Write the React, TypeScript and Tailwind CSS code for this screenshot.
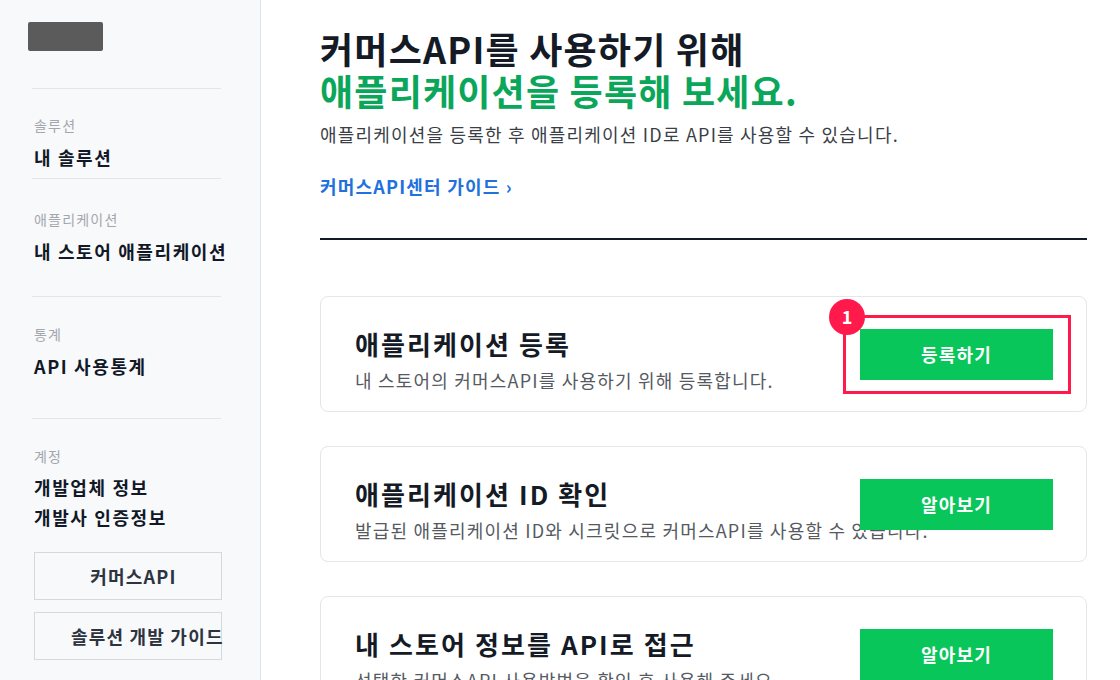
const font = { fontFamily: '"Noto Sans CJK KR", "Noto Sans", sans-serif' };

type NavSection = {
  label: string;
  items: string[];
  pad: string;
};

const sections: NavSection[] = [
  { label: '솔루션', items: ['내 솔루션'], pad: 'pt-[26px] pb-[8px]' },
  { label: '애플리케이션', items: ['내 스토어 애플리케이션'], pad: 'pt-[30px] pb-[32px]' },
  { label: '통계', items: ['API 사용통계'], pad: 'pt-[27px] pb-[39px]' },
];

type Card = {
  title: string;
  desc: string;
  action: string;
  highlight?: boolean;
};

const cards: Card[] = [
  {
    title: '애플리케이션 등록',
    desc: '내 스토어의 커머스API를 사용하기 위해 등록합니다.',
    action: '등록하기',
    highlight: true,
  },
  {
    title: '애플리케이션 ID 확인',
    desc: '발급된 애플리케이션 ID와 시크릿으로 커머스API를 사용할 수 있습니다.',
    action: '알아보기',
  },
  {
    title: '내 스토어 정보를 API로 접근',
    desc: '선택한 커머스API 사용방법을 확인 후 사용해 주세요.',
    action: '알아보기',
  },
];

function Sidebar() {
  return (
    <aside className="w-[261px] shrink-0 border-r border-[#dfe3ea] bg-[#f8f9fb] pl-[32px] pr-[39px]">
      <div className="pt-[22px] pb-[37px] -ml-[4px]">
        <div className="h-[29px] w-[75px] rounded-[2px] bg-[#5b5b5b]" />
      </div>

      {sections.map((s) => (
        <div key={s.label} className={`border-t border-[#e3e5e8] pl-[2px] ${s.pad}`}>
          <div className="text-[14px] leading-[20px] text-[#a3a7ad]">{s.label}</div>
          <div className="mt-[9px] whitespace-nowrap text-[18px] font-bold leading-[26px] tracking-[0.09em] text-[#111827]">
            {s.items[0]}
          </div>
        </div>
      ))}

      <div className="border-t border-[#e3e5e8] pt-[27px]">
        <div className="pl-[2px] text-[14px] leading-[20px] text-[#a3a7ad]">계정</div>
        <div className="mt-[6px] whitespace-nowrap pl-[2px] text-[18px] font-bold leading-[30px] tracking-[0.09em] text-[#111827]">
          <div>개발업체 정보</div>
          <div>개발사 인증정보</div>
        </div>
        <div className="mt-[20px] flex flex-col gap-[12px]">
          <button className="ml-[2px] h-[48px] w-[188px] border border-[#d5d8dd] pl-[36px] pr-[25px] text-center text-[18px] font-bold whitespace-nowrap text-[#2d3440]">
            커머스API
          </button>
          <button className="ml-[2px] h-[48px] w-[188px] border border-[#d5d8dd] pl-[36px] pr-[25px] text-left text-[18px] font-bold whitespace-nowrap text-[#2d3440]">
            솔루션 개발 가이드
          </button>
        </div>
      </div>
    </aside>
  );
}

function ActionCard({ card }: { card: Card }) {
  return (
    <div className="flex h-[116px] shrink-0 items-center rounded-[8px] border border-[#e4e6e9] bg-white pl-[34px] pr-[33px]">
      <div className="min-w-0 flex-1 self-start pt-[30px] whitespace-nowrap">
        <div className="text-[26px] font-bold leading-[34px] tracking-[0.08em] text-[#151b26]">{card.title}</div>
        <div className="mt-[6px] text-[18px] leading-[26px] text-[#555a62]">{card.desc}</div>
      </div>
      <div className="relative shrink-0">
        <button className="relative z-10 h-[51px] w-[193px] bg-[#08c65a] text-[18px] font-bold text-white">
          {card.action}
        </button>
        {card.highlight && (
          <div className="absolute -top-[14px] -bottom-[14px] -left-[17px] -right-[18px] z-20 border-[3px] border-[#ff1a4b]">
            <span className="absolute -top-[19px] -left-[17px] flex h-[36px] w-[36px] items-center justify-center rounded-full bg-[#ff1a4b] text-[18px] font-bold tracking-normal text-white">
              1
            </span>
          </div>
        )}
      </div>
    </div>
  );
}

export default function App() {
  return (
    <div className="flex h-[680px] w-[1120px] overflow-hidden bg-white tracking-[0.075em]" style={font}>
      <Sidebar />

      <main className="flex min-w-0 flex-1 flex-col pl-[59px] pr-[33px] pt-[27px]">
        <h1 className="text-[36px] font-bold leading-[42px] text-[#151b26]">
          커머스API를 사용하기 위해
          <br />
          <span className="text-[#0aa65a]">애플리케이션을 등록해 보세요.</span>
        </h1>
        <p className="mt-[10px] text-[18px] leading-[26px] text-[#3a3f47]">
          애플리케이션을 등록한 후 애플리케이션 ID로 API를 사용할 수 있습니다.
        </p>
        <a className="mt-[26px] text-[18px] font-bold leading-[26px] text-[#2270dc]" href="#">
          커머스API센터 가이드 ›
        </a>

        <div className="mt-[39px] h-[2px] shrink-0 bg-[#151b26]" />

        <div className="mt-[56px] flex flex-col gap-[34px]">
          {cards.map((c) => (
            <ActionCard key={c.title} card={c} />
          ))}
        </div>
      </main>
    </div>
  );
}
